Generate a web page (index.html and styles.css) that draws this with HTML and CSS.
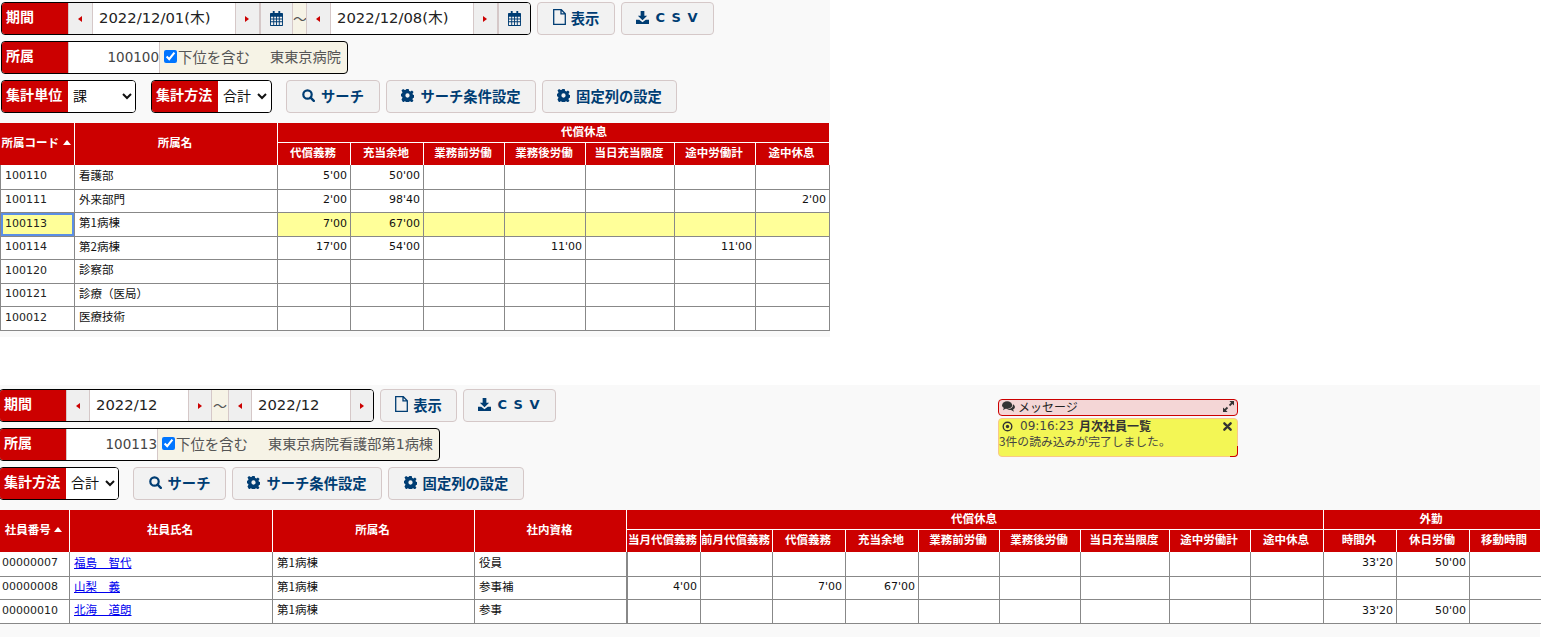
FILE: index.html
```html
<!DOCTYPE html>
<html lang="ja">
<head>
<meta charset="utf-8">
<title>代償休息</title>
<link rel="stylesheet" href="styles.css">
</head>
<body>
<svg class="defs" width="0" height="0" aria-hidden="true">
  <symbol id="i-cal" viewBox="0 0 14 16"><path d="M3 0h2v2h4V0h2v2h2.2c.5 0 .8.3.8.8v12.4c0 .5-.3.8-.8.8H.8c-.5 0-.8-.3-.8-.8V2.800c0-.5.3-.8.8-.8H3zM1 6v2h2.500V6zm3.500 0v2h2V6zm3 0v2h2V6zm3 0v2H13V6zM1 9v2h2.500V9zm3.500 0v2h2V9zm3 0v2h2V9zm3 0v2H13V9zM1 12v3h2.500v-3zm3.500 0v3h2v-3zm3 0v3h2v-3zm3 0v3H13v-3z" fill-rule="evenodd"/></symbol>
  <symbol id="i-file" viewBox="0 0 13 16"><path d="M.7.7h7.600l4 4v10.600H.7zM8 .9v4h4" fill="none" stroke="currentColor" stroke-width="1.300"/></symbol>
  <symbol id="i-dl" viewBox="0 0 14 14"><path d="M5 0h4v5h3L7 10 2 5h3zM0 9.500h3.500L7 12l3.500-2.500H14V14H0z"/></symbol>
  <symbol id="i-search" viewBox="0 0 13 13"><circle cx="5.500" cy="5.500" r="4.200" fill="none" stroke="currentColor" stroke-width="2.200"/><path d="M8.600 8.600l3.200 3.200" stroke="currentColor" stroke-width="2.400" stroke-linecap="round"/></symbol>
  <symbol id="i-gear" viewBox="0 0 14 14"><path fill-rule="evenodd" d="M5.700 0h2.600l.4 2 1.300.6L11.800 1.500l1.700 1.700-1.100 1.800.5 1.300 2 .4v2.600l-2 .4-.6 1.300 1.100 1.700-1.700 1.700-1.800-1.100-1.300.5-.4 2H5.700l-.4-2-1.300-.5-1.800 1.100L.5 11.200l1.100-1.700L1 8.200l-2-.4V5.200l2-.4.600-1.300-1.100-1.800L2.200.1l1.800 1.100 1.300-.5zM7 4.700a2.300 2.300 0 1 0 0 4.600 2.300 2.300 0 0 0 0-4.600z"/></symbol>
  <symbol id="i-comments" viewBox="0 0 14 12"><ellipse cx="5.500" cy="4.500" rx="5.500" ry="4.200"/><path d="M2 7l-1 3 3.500-2z"/><path d="M11.800 3.500C13.200 4.300 14 5.400 14 6.600c0 1.200-.8 2.200-2 2.800l1 2.300-3.200-1.800c-1.600.1-3.200-.3-4.200-1.200 3.600.3 7-1.700 6.200-5.200z"/></symbol>
  <symbol id="i-expand" viewBox="0 0 12 12"><path d="M7 0h5v5l-1.800-1.800-2.400 2.400-1.400-1.400 2.400-2.400zM5 12H0V7l1.800 1.800 2.400-2.400 1.400 1.400-2.400 2.400z"/></symbol>
  <symbol id="i-x" viewBox="0 0 10 10"><path d="M1.500 1.500l7 7M8.500 1.500l-7 7" stroke="currentColor" stroke-width="2.600" stroke-linecap="round"/></symbol>
  <symbol id="i-dot" viewBox="0 0 12 12"><circle cx="6" cy="6" r="4.700" fill="none" stroke="currentColor" stroke-width="1.500"/><circle cx="6" cy="6" r="1.800"/></symbol>
  <symbol id="i-sort" viewBox="0 0 8 5"><path d="M4 0l4 5H0z"/></symbol>
</svg>

<section class="panel panel-a">
  <div class="row">
    <div class="group">
      <span class="label">期間</span>
      <button class="nav prev"></button><span class="date date-a">2022/12/01(木)</span><button class="nav next"></button>
      <span class="cal"><svg class="ic"><use href="#i-cal"/></svg></span>
      <span class="tilde">～</span>
      <button class="nav prev"></button><span class="date date-a">2022/12/08(木)</span><button class="nav next"></button>
      <span class="cal cal-end"><svg class="ic"><use href="#i-cal"/></svg></span>
    </div>
    <button class="btn w-show"><svg class="ic"><use href="#i-file"/></svg>表示</button>
    <button class="btn w-csv"><svg class="ic ic-s"><use href="#i-dl"/></svg><span class="csv">C S V</span></button>
  </div>
  <div class="row">
    <div class="group cream">
      <span class="label">所属</span>
      <span class="code">100100</span>
      <input class="chk" type="checkbox" checked>
      <span class="chk-text">下位を含む</span>
      <span class="org">東東京病院</span>
    </div>
  </div>
  <div class="row">
    <div class="group sel-unit">
      <span class="label">集計単位</span>
      <select class="sel sel-w"><option>課</option></select>
    </div>
    <div class="group sel-way">
      <span class="label">集計方法</span>
      <select class="sel sel-n"><option>合計</option></select>
    </div>
    <button class="btn w-search s1"><svg class="ic ic-s"><use href="#i-search"/></svg>サーチ</button>
    <button class="btn w-cond"><svg class="ic ic-s"><use href="#i-gear"/></svg>サーチ条件設定</button>
    <button class="btn w-fix"><svg class="ic ic-s"><use href="#i-gear"/></svg>固定列の設定</button>
  </div>
  <table class="grid grid-a">
    <colgroup><col class="c75"><col class="c203"><col class="c73"><col class="c73"><col class="c81"><col class="c81"><col class="c89"><col class="c81"><col class="c74"></colgroup>
    <thead>
      <tr><th rowspan="2">所属コード <svg class="sort"><use href="#i-sort"/></svg></th><th rowspan="2">所属名</th><th colspan="7" class="top off">代償休息</th></tr>
      <tr><th>代償義務</th><th>充当余地</th><th>業務前労働</th><th>業務後労働</th><th>当日充当限度</th><th>途中労働計</th><th>途中休息</th></tr>
    </thead>
    <tbody>
      <tr><td class="n">100110</td><td class="t">看護部</td><td class="r">5'00</td><td class="r">50'00</td><td></td><td></td><td></td><td></td><td></td></tr>
      <tr><td class="n">100111</td><td class="t">外来部門</td><td class="r">2'00</td><td class="r">98'40</td><td></td><td></td><td></td><td></td><td class="r">2'00</td></tr>
      <tr class="hl"><td class="n focus">100113</td><td class="t plain">第1病棟</td><td class="r">7'00</td><td class="r">67'00</td><td></td><td></td><td></td><td></td><td></td></tr>
      <tr><td class="n">100114</td><td class="t">第2病棟</td><td class="r">17'00</td><td class="r">54'00</td><td></td><td class="r">11'00</td><td></td><td class="r">11'00</td><td></td></tr>
      <tr><td class="n">100120</td><td class="t">診察部</td><td></td><td></td><td></td><td></td><td></td><td></td><td></td></tr>
      <tr><td class="n">100121</td><td class="t">診療（医局）</td><td></td><td></td><td></td><td></td><td></td><td></td><td></td></tr>
      <tr><td class="n">100012</td><td class="t">医療技術</td><td></td><td></td><td></td><td></td><td></td><td></td><td></td></tr>
    </tbody>
  </table>
</section>

<section class="panel panel-b">
  <div class="row">
    <div class="group">
      <span class="label">期間</span>
      <button class="nav prev"></button><span class="date date-b">2022/12</span><button class="nav next"></button>
      <span class="tilde tilde-b">～</span>
      <button class="nav prev"></button><span class="date date-b">2022/12</span><button class="nav next"></button>
    </div>
    <button class="btn w-show"><svg class="ic"><use href="#i-file"/></svg>表示</button>
    <button class="btn w-csv"><svg class="ic ic-s"><use href="#i-dl"/></svg><span class="csv">C S V</span></button>
  </div>
  <div class="row">
    <div class="group cream">
      <span class="label">所属</span>
      <span class="code">100113</span>
      <input class="chk" type="checkbox" checked>
      <span class="chk-text">下位を含む</span>
      <span class="org">東東京病院看護部第1病棟</span>
    </div>
  </div>
  <div class="row">
    <div class="group">
      <span class="label">集計方法</span>
      <select class="sel sel-n"><option>合計</option></select>
    </div>
    <button class="btn w-search s2"><svg class="ic ic-s"><use href="#i-search"/></svg>サーチ</button>
    <button class="btn w-cond"><svg class="ic ic-s"><use href="#i-gear"/></svg>サーチ条件設定</button>
    <button class="btn w-fix"><svg class="ic ic-s"><use href="#i-gear"/></svg>固定列の設定</button>
  </div>
  <table class="grid grid-b">
    <colgroup><col class="c70"><col class="c203"><col class="c202"><col class="c152"><col class="c74"><col class="c72"><col class="c73"><col class="c73"><col class="c81"><col class="c81"><col class="c89"><col class="c81"><col class="c73"><col class="c73"><col class="c73"><col class="c71"></colgroup>
    <thead>
      <tr><th rowspan="2">社員番号 <svg class="sort"><use href="#i-sort"/></svg></th><th rowspan="2">社員氏名</th><th rowspan="2">所属名</th><th rowspan="2">社内資格</th><th colspan="9" class="top">代償休息</th><th colspan="3" class="top">外勤</th></tr>
      <tr><th>当月代償義務</th><th>前月代償義務</th><th>代償義務</th><th>充当余地</th><th>業務前労働</th><th>業務後労働</th><th>当日充当限度</th><th>途中労働計</th><th>途中休息</th><th>時間外</th><th>休日労働</th><th>移動時間</th></tr>
    </thead>
    <tbody>
      <tr><td class="n n0">00000007</td><td class="t"><a href="#">福島　智代</a></td><td class="t">第1病棟</td><td class="t">役員</td><td class="thick"></td><td></td><td></td><td></td><td></td><td></td><td></td><td></td><td></td><td class="r">33'20</td><td class="r">50'00</td><td></td></tr>
      <tr><td class="n n0">00000008</td><td class="t"><a href="#">山梨　義</a></td><td class="t">第1病棟</td><td class="t">参事補</td><td class="r thick">4'00</td><td></td><td class="r">7'00</td><td class="r">67'00</td><td></td><td></td><td></td><td></td><td></td><td></td><td></td><td></td></tr>
      <tr><td class="n n0">00000010</td><td class="t"><a href="#">北海　道朗</a></td><td class="t">第1病棟</td><td class="t">参事</td><td class="thick"></td><td></td><td></td><td></td><td></td><td></td><td></td><td></td><td></td><td class="r">33'20</td><td class="r">50'00</td><td></td></tr>
    </tbody>
  </table>
  <aside class="msg">
    <div class="msg-head"><svg class="ic-c"><use href="#i-comments"/></svg><span class="msg-title">メッセージ</span><svg class="ic-e"><use href="#i-expand"/></svg></div>
    <div class="msg-body">
      <div class="msg-line"><svg class="ic-d"><use href="#i-dot"/></svg><span class="msg-time">09:16:23</span><b class="msg-name">月次社員一覧</b><svg class="ic-x"><use href="#i-x"/></svg></div>
      <div class="msg-text">3件の読み込みが完了しました。</div>
    </div>
  </aside>
</section>
</body>
</html>
```

FILE: styles.css
```css
* { box-sizing: border-box; }
html, body { margin: 0; padding: 0; background: #fff; }
body {
  font-family: "DejaVu Sans", "Noto Sans CJK JP", sans-serif;
  font-size: 12px;
  color: #222;
  overflow: hidden;
  height: 637px;
}
.defs { position: absolute; }

.panel { background: #f9f9f9; position: relative; }
.panel-a { width: 830px; height: 337px; padding: 2px 0 0 1px; margin-bottom: 48px; }
.panel-b { width: 1540px; height: 252px; padding: 4px 0 0 0; }
.panel-a .grid { margin-left: -1px; }
.panel-b .group { margin-left: -1px; }

.row { display: flex; height: 33px; margin-bottom: 6px; align-items: stretch; }
.row:nth-of-type(3) { margin-bottom: 10px; }

.group {
  display: flex;
  align-items: stretch;
  border: 1px solid #000;
  border-radius: 4px;
  background: #fff;
  overflow: hidden;
}
.group.cream { background: #f6f3e6; }
.label {
  width: 66px;
  flex: none;
  background: #cc0000;
  color: #fff;
  font-weight: bold;
  font-size: 14px;
  font-family: "Noto Sans CJK JP", sans-serif;
  padding-left: 4px;
  line-height: 26px;
  white-space: nowrap;
  letter-spacing: .1px;
}
.nav {
  width: 24px;
  flex: none;
  margin: 0;
  padding: 0;
  background: #efefef;
  border: 0;
  border-left: 1px solid #d5c8c8;
  position: relative;
}
.panel-b .nav { width: 23px; }
.nav::after {
  content: "";
  position: absolute;
  left: 9px;
  top: 13px;
  border: 3.5px solid transparent;
  border-left-width: 0;
  border-right: 4px solid #cc0000;
}
.nav.next::after { border-right-width: 0; border-left: 4px solid #cc0000; }
.date {
  font-size: 14.8px;
  line-height: 30px;
  color: #222;
  padding-left: 6px;
  background: #fff;
  flex: none;
  white-space: nowrap;
  border-left: 1px solid #d5c8c8;
}
.date-a { width: 143px; }
.date-b { width: 99px; }
.cal {
  width: 33px;
  flex: none;
  background: #efefef;
  border-left: 2px solid #d5c8c8;
  color: #003d73;
  display: flex;
  align-items: center;
  justify-content: center;
}
.cal .ic { width: 13px; height: 15px; margin: 0; fill: currentColor; }
.tilde {
  width: 14px;
  flex: none;
  background: #f6f3e6;
  border-left: 1px solid #d5c8c8;
  font-size: 14px;
  line-height: 30px;
  font-family: "Noto Sans CJK JP", sans-serif;
  color: #555;
  text-align: center;
  overflow: hidden;
}
.tilde-b { width: 17px; }

.code {
  width: 92px;
  flex: none;
  background: #fff;
  border-left: 1px solid #d5c8c8;
  border-right: 1px solid #d5c8c8;
  color: #444;
  font-size: 13.5px;
  line-height: 30px;
  text-align: right;
}
.chk { width: 13px; height: 13px; margin: 8px 0 0 4px; flex: none; }
.chk-text {
  font-family: "Noto Sans CJK JP", sans-serif;
  font-size: 14.4px;
  line-height: 30px;
  color: #555;
  margin-left: 1px;
  white-space: nowrap;
}
.org {
  font-size: 14.2px;
  line-height: 30px;
  color: #555;
  margin: 0 6px 0 20px;
  white-space: nowrap;
}
.sel {
  border: 0;
  border-radius: 0;
  background: #fff;
  font-family: "Noto Sans CJK JP", sans-serif;
  font-size: 14px;
  color: #111;
  padding: 0 0 3px 1px;
  margin: 0;
  outline: 0;
}
.sel-w { width: 67px; }
.sel-n { width: 52px; }
.sel-unit { width: 135px; margin-right: 15px; }
.sel-way { width: 121px; margin-right: 14px; }

.btn {
  flex: none;
  margin: 0 6px 0 0;
  padding: 0 0 3px;
  background: #f2f2f2;
  border: 1px solid #d5c8c8;
  border-radius: 4px;
  color: #003d73;
  font-family: "Noto Sans CJK JP", sans-serif;
  font-weight: bold;
  font-size: 14.3px;
  display: inline-flex;
  align-items: center;
  justify-content: center;
}
.panel-a .row:first-child .group,
.panel-b .row:first-child .group { margin-right: 6px; }
.w-show { width: 78px; }
.panel-b .w-show { width: 77px; }
.w-csv { width: 93px; }
.w-search { width: 94px; }
.w-cond { width: 150px; }
.w-fix { width: 135px; }
.s2 { margin-left: 14px; }
.panel-b .w-search { width: 93px; }
.panel-b .w-fix { width: 136px; }
.ic { width: 13px; height: 16px; margin-right: 5px; fill: currentColor; }
.ic-s { width: 13px; height: 13px; margin-right: 6px; }
.csv { letter-spacing: 1px; font-family: "DejaVu Sans", sans-serif; font-weight: bold; font-size: 13px; }

.grid {
  border-collapse: separate;
  border-spacing: 0;
  table-layout: fixed;
}
.grid-a { width: 830px; }
.grid-b { width: 1540px; }
.c70 { width: 70px; } .c71 { width: 71px; } .c72 { width: 72px; } .c73 { width: 73px; }
.c74 { width: 74px; } .c75 { width: 75px; } .c81 { width: 81px; } .c89 { width: 89px; }
.c152 { width: 152px; } .c202 { width: 202px; } .c203 { width: 203px; }

.grid th {
  background: #cc0000;
  color: #fff;
  font-family: "Noto Sans CJK JP", sans-serif;
  font-size: 11.5px;
  font-weight: bold;
  padding: 0 2px 5px 0;
  border-right: 1px solid #fff;
  white-space: nowrap;
  overflow: hidden;
  text-align: center;
  line-height: 14px;
}
.grid thead tr:first-child { height: 20px; }
.grid thead tr:last-child { height: 22px; }
.grid th.top { border-bottom: 1px solid #fff; padding-bottom: 3px; }
.grid th.off { padding-left: 63px; }
.sort { width: 8px; height: 5px; fill: #fff; margin-left: 1px; vertical-align: 2px; }

.grid td {
  background: #fff;
  padding: 0 0 2px;
  border-right: 1px solid #888;
  border-bottom: 1px solid #888;
  color: #111;
  font-size: 11px;
  line-height: 14px;
  white-space: nowrap;
  overflow: hidden;
}
.grid td:first-child { border-left: 1px solid #888; }
.grid-b td:first-child { border-left: 0; }
.grid-b td:last-child { border-right: 0; }
.grid tbody tr { height: 23px; }
.grid tbody tr:nth-child(odd) { height: 24px; }
.grid tbody tr:first-child { height: 25px; }
.grid td.n { padding-left: 4px; color: #222; }
.grid td.n0 { padding-left: 2px; }
.grid td.t { padding: 0 0 5px 4px; font-family: "Noto Sans CJK JP", sans-serif; font-size: 11.5px; }
.grid td.r { text-align: right; padding-right: 3px; }
.grid td.thick { border-left: 1px solid #888; }
.grid tr.hl td { background: #ffff99; }
.grid tr.hl td.plain { background: #fff; }
.grid tr.hl td.focus { box-shadow: inset 0 0 0 2px #5b8fe6; }
.grid a { color: #0000ee; text-decoration: underline; }

.msg { position: absolute; left: 998px; top: 14px; width: 240px; color: #333; }
.msg-head {
  height: 17px;
  background: #f4d6d6;
  border: 1px solid #cc0000;
  border-radius: 4px;
  display: flex;
  align-items: center;
  padding: 0 3px 2px;
  font-family: "Noto Sans CJK JP", sans-serif;
  font-size: 12px;
  color: #222;
}
.ic-c { width: 13px; height: 11px; fill: #333; margin-right: 3px; flex: none; }
.msg-title { flex: 1; }
.ic-e { width: 11px; height: 11px; fill: #333; flex: none; }
.msg-body {
  position: relative;
  margin-top: 2px;
  height: 39px;
  background: #f3f655;
  border: 1px solid #f8c88a;
  border-radius: 4px;
  font-size: 12px;
  line-height: 14px;
}
.msg-body::after {
  content: "";
  position: absolute;
  right: -1px;
  bottom: -1px;
  width: 7px;
  height: 10px;
  border-right: 1px solid #cc0000;
  border-bottom: 1px solid #cc0000;
  border-bottom-right-radius: 4px;
}
.msg-line { display: flex; align-items: center; height: 14px; padding: 0 5px 0 3px; color: #333; }
.ic-d { width: 11px; height: 11px; fill: #333; margin-right: 7px; flex: none; }
.msg-time { font-size: 12px; color: #444; margin-right: 5px; }
.msg-name { font-family: "Noto Sans CJK JP", sans-serif; flex: 1; color: #333; }
.ic-x { width: 9px; height: 9px; fill: #333; color: #333; flex: none; }
.msg-text { font-family: "Noto Sans CJK JP", sans-serif; font-size: 11.8px; color: #444; padding-top: 1px; }
```
